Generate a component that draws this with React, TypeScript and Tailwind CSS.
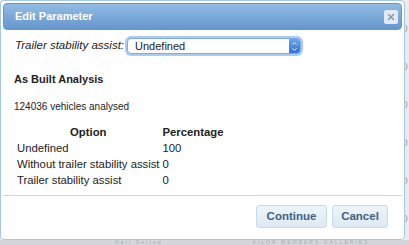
import { ChevronDown, ChevronUp, X } from "lucide-react";

const rows = [
  { option: "Undefined", pct: "100" },
  { option: "Without trailer stability assist", pct: "0" },
  { option: "Trailer stability assist", pct: "0" },
];

export default function App() {
  return (
    <div
      className="relative h-[245px] w-[409px] overflow-hidden bg-[#e9ecef] text-[#222]"
      style={{ fontFamily: '"Liberation Sans", Arial, sans-serif' }}
    >
      {/* page behind the dialog */}
      <div className="absolute right-0 top-0 flex h-full w-[4px] flex-col gap-[30px] pt-[24px] text-[8px] leading-none text-[#888]">
        <span>)</span>
        <span>)</span>
        <span>)</span>
        <span>)</span>
        <span>)</span>
        <span>)</span>
      </div>
      <div className="absolute bottom-0 left-0 flex h-[5px] w-full items-end gap-[90px] bg-[#d3d7db] pl-[115px] text-[5px] leading-[5px] tracking-[2px] text-[#a7afb6]">
        <span>Hart Sorted</span>
        <span>AILOR MEMBERS GALLERIES</span>
      </div>

      {/* dialog */}
      <div className="absolute left-0 top-0 flex h-[240px] w-[405px] flex-col rounded-[4px] border border-[#a6c9e2] bg-white p-[2px]">
        <div className="flex h-[27px] items-center justify-between rounded-[4px] border border-[#6597cd] bg-gradient-to-b from-[#92bce5] to-[#6596cc] pl-[11px] pr-[3px]">
          <span className="text-[11px] font-bold text-white">Edit Parameter</span>
          <span className="flex h-[14px] w-[14px] items-center justify-center rounded-[2px] bg-[#e1ebf5]">
            <X size={10} strokeWidth={3.5} className="text-[#8a98a6]" />
          </span>
        </div>

        <div className="flex items-center gap-[1px] pl-[12px] pt-[6px]">
          <span className="text-[11.5px] italic">Trailer stability assist:</span>
          <div className="rounded-[6px] bg-[#a9cbf5] p-[2px]">
            <div className="flex h-[16px] w-[174px] items-center justify-between rounded-[4px] border border-[#7eaae0] bg-white pl-[7px] text-[11px]">
              <span>Undefined</span>
              <span className="flex h-full w-[11px] flex-col items-center justify-center rounded-r-[3px] bg-gradient-to-b from-[#6aa6ef] to-[#2d72d9] text-white">
                <ChevronUp size={7} strokeWidth={3} className="-mb-[1px]" />
                <ChevronDown size={7} strokeWidth={3} />
              </span>
            </div>
          </div>
        </div>

        <div className="pl-[11px] pt-[15px] text-[11px] font-bold">As Built Analysis</div>
        <div className="pl-[11px] pt-[11px] text-[10px]">124036 vehicles analysed</div>

        <table className="ml-[12px] mt-[10px] self-start border-separate border-spacing-[1px] text-[11.3px] leading-[15px]">
          <thead>
            <tr>
              <th className="px-[1px] text-center font-bold">Option</th>
              <th className="px-[1px] text-left font-bold">Percentage</th>
            </tr>
          </thead>
          <tbody>
            {rows.map((r) => (
              <tr key={r.option}>
                <td className="px-[1px]">{r.option}</td>
                <td className="px-[1px]">{r.pct}</td>
              </tr>
            ))}
          </tbody>
        </table>

        <div className="mt-auto flex h-[42px] items-center justify-end gap-[5px] border-t border-[#cfd6dc] pr-[14px]">
          <button className="h-[23px] w-[71px] rounded-[3px] border border-[#c5dbec] bg-gradient-to-b from-[#eef4fa] to-[#dde9f4] text-[11.5px] font-bold text-[#3d6286]">
            Continue
          </button>
          <button className="h-[23px] w-[56px] rounded-[3px] border border-[#c5dbec] bg-gradient-to-b from-[#eef4fa] to-[#dde9f4] text-[11.5px] font-bold text-[#3d6286]">
            Cancel
          </button>
        </div>
      </div>
    </div>
  );
}
